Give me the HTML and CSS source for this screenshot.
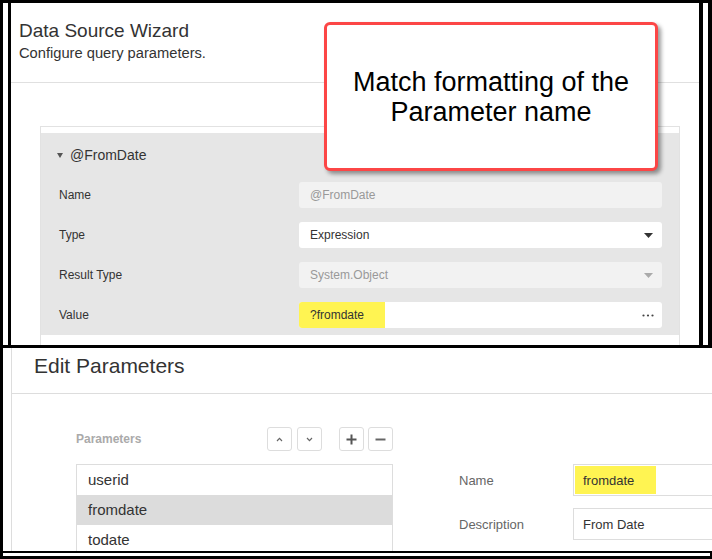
FILE: index.html
```html
<!DOCTYPE html>
<html lang="en">
<head>
  <meta charset="UTF-8">
  <title>Parameter name formatting</title>
  <link rel="stylesheet" href="styles.css">
</head>
<body>
  <div class="frame">
    <div class="shot-top">
      <div class="wizard">
        <div class="wizard-head">
          <div class="wizard-title">Data Source Wizard</div>
          <div class="wizard-sub">Configure query parameters.</div>
        </div>

        <div class="param-box">
          <div class="param">
            <div class="param-head">
              <svg width="6" height="5" viewBox="0 0 6 5"><path d="M0 0h6L3 5z" fill="#555"/></svg>
              @FromDate
            </div>

            <div class="field field-first">
              <div class="field-label">Name</div>
              <div class="input disabled">@FromDate</div>
            </div>
            <div class="field">
              <div class="field-label">Type</div>
              <div class="input select">
                Expression
                <svg width="9" height="5" viewBox="0 0 9 5"><path d="M0 0h9L4.5 5z" fill="#333"/></svg>
              </div>
            </div>
            <div class="field">
              <div class="field-label">Result Type</div>
              <div class="input select disabled">
                System.Object
                <svg width="9" height="5" viewBox="0 0 9 5"><path d="M0 0h9L4.5 5z" fill="#aaa"/></svg>
              </div>
            </div>
            <div class="field">
              <div class="field-label">Value</div>
              <div class="input value">
                <span class="hl">?fromdate</span>
                <svg class="dots" width="12" height="3" viewBox="0 0 12 3">
                  <circle cx="1.5" cy="1.5" r="1.1" fill="#444"/>
                  <circle cx="6" cy="1.5" r="1.1" fill="#444"/>
                  <circle cx="10.5" cy="1.5" r="1.1" fill="#444"/>
                </svg>
              </div>
            </div>
          </div>
        </div>
      </div>
    </div>

    <div class="shot-bottom">
      <div class="editor-wrap">
        <div class="editor">
          <div class="editor-head">Edit Parameters</div>
          <div class="editor-body">
            <div class="list-col">
              <div class="toolbar">
                <span class="toolbar-label">Parameters</span>
                <div class="btn">
                  <svg width="7" height="5" viewBox="0 0 7 5"><path d="M1 4L3.5 1.3L6 4" fill="none" stroke="#666" stroke-width="1.2"/></svg>
                </div>
                <div class="btn btn-near">
                  <svg width="7" height="5" viewBox="0 0 7 5"><path d="M1 1L3.5 3.7L6 1" fill="none" stroke="#666" stroke-width="1.2"/></svg>
                </div>
                <div class="btn btn-group">
                  <svg width="11" height="11" viewBox="0 0 11 11"><path d="M5.5 0.5v10M0.5 5.5h10" stroke="#555" stroke-width="2"/></svg>
                </div>
                <div class="btn btn-tight">
                  <svg width="11" height="11" viewBox="0 0 11 11"><path d="M0.5 5.5h10" stroke="#666" stroke-width="2"/></svg>
                </div>
              </div>
              <ul class="plist">
                <li>userid</li>
                <li class="selected">fromdate</li>
                <li>todate</li>
              </ul>
            </div>

            <div class="props">
              <div class="prop">
                <div class="prop-label">Name</div>
                <div class="prop-input"><span class="hl">fromdate</span></div>
              </div>
              <div class="prop">
                <div class="prop-label">Description</div>
                <div class="prop-input plain">From Date</div>
              </div>
            </div>
          </div>
        </div>
      </div>
      <div class="tail"></div>
    </div>

    <div class="callout">Match formatting of the<br>Parameter name</div>
  </div>
</body>
</html>
```

FILE: styles.css
```css
* {
  box-sizing: border-box;
}

body {
  margin: 0;
  font-family: "Liberation Sans", Arial, sans-serif;
  background: #fff;
}

.frame {
  position: relative;
  width: 712px;
  height: 559px;
  overflow: hidden;
  background: #fff;
}

/* top screenshot */
.shot-top {
  height: 348px;
  border: 3px solid #000;
  border-right-width: 4px;
  padding: 0 5px;
}

.wizard {
  height: 100%;
  border-left: 3px solid #000;
  border-right: 4px solid #000;
  overflow: hidden;
}

.wizard-head {
  padding: 17px 8px 20px;
  border-bottom: 1px solid #e0e0e0;
  color: #333;
}

.wizard-title {
  font-size: 19px;
  line-height: 22px;
}

.wizard-sub {
  margin-top: 2px;
  font-size: 14.7px;
  line-height: 18px;
}

.param-box {
  margin: 43px 19px 0 29px;
  padding: 6px 0 20px;
  border: 1px solid #e2e2e2;
}

.param {
  background: #e6e6e6;
  padding: 0 17px 7px 18px;
}

.param-head {
  display: flex;
  align-items: center;
  gap: 7px;
  height: 44px;
  margin-left: -2px;
  font-size: 14px;
  color: #333;
}

.field {
  display: grid;
  grid-template-columns: 240px 1fr;
  align-items: center;
  height: 26px;
  margin-top: 14px;
}

.field-first {
  margin-top: 5px;
}

.field-label {
  font-size: 12px;
  color: #333;
}

.input {
  display: flex;
  align-items: center;
  height: 26px;
  padding: 0 11px;
  border-radius: 3px;
  background: #fff;
  font-size: 12px;
  color: #333;
}

.input.disabled {
  background: #f2f2f2;
  color: #999;
}

.input.select {
  justify-content: space-between;
  padding-right: 9px;
}

.input.value {
  padding: 0;
  overflow: hidden;
}

.input.value .hl {
  display: flex;
  align-items: center;
  width: 86px;
  height: 100%;
  padding-left: 11px;
  background: #fff452;
}

.dots {
  margin-left: auto;
  margin-right: 8px;
}

/* callout */
.callout {
  position: absolute;
  left: 324px;
  top: 22px;
  width: 334px;
  height: 149px;
  display: flex;
  align-items: center;
  justify-content: center;
  text-align: center;
  border: 3px solid #fc4646;
  border-radius: 6px;
  background: #fff;
  box-shadow: 3px 3px 4px rgba(0, 0, 0, 0.4);
  font-size: 27px;
  line-height: 30px;
  color: #000;
}

/* bottom screenshot */
.shot-bottom {
  height: 211px;
  border-left: 3px solid #000;
  border-bottom: 3px solid #000;
}

.editor-wrap {
  height: 205px;
  padding-left: 8px;
  border-bottom: 2px solid #000;
}

.editor {
  height: 100%;
  border-left: 1px solid #ddd;
  overflow: hidden;
}

.tail {
  height: 3px;
  border-right: 2px solid #000;
}

.editor-head {
  padding: 6px 0 15px 22px;
  border-bottom: 1px solid #ddd;
  font-size: 21px;
  line-height: 24px;
  color: #333;
}

.editor-body {
  display: flex;
  padding: 33px 0 0 64px;
}

.list-col {
  flex: none;
  width: 317px;
}

.toolbar {
  display: flex;
  align-items: center;
  height: 24px;
}

.toolbar-label {
  flex: 1;
  font-size: 12px;
  font-weight: bold;
  color: #aaa;
}

.btn {
  display: flex;
  align-items: center;
  justify-content: center;
  width: 25px;
  height: 24px;
  border: 1px solid #ddd;
  border-radius: 3px;
  background: #fff;
}

.btn-near {
  margin-left: 5px;
}

.btn-group {
  margin-left: 17px;
}

.btn-tight {
  margin-left: 4px;
}

.plist {
  margin: 13px 0 0;
  padding: 0;
  list-style: none;
  border: 1px solid #ddd;
}

.plist li {
  height: 30px;
  line-height: 30px;
  padding-left: 11px;
  font-size: 15px;
  color: #333;
}

.plist li.selected {
  background: #dcdcdc;
}

.props {
  flex: none;
  margin: 37px 0 0 66px;
}

.prop {
  display: grid;
  grid-template-columns: 114px 200px;
  align-items: center;
  height: 32px;
  margin-bottom: 12px;
}

.prop-label {
  font-size: 13px;
  color: #666;
}

.prop-input {
  display: flex;
  align-items: center;
  height: 32px;
  padding: 1px;
  border: 1px solid #ddd;
  font-size: 13px;
  color: #333;
}

.prop-input.plain {
  padding-left: 9px;
}

.prop-input .hl {
  display: flex;
  align-items: center;
  width: 81px;
  height: 100%;
  padding-left: 8px;
  background: #fff452;
}
```
